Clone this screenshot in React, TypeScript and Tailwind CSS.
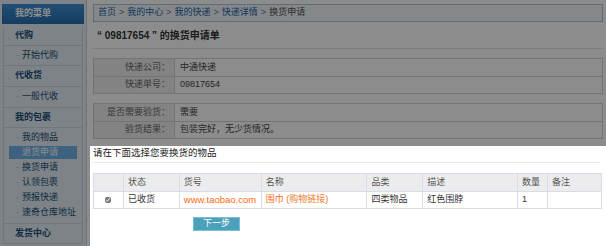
const font = { fontFamily: '"Liberation Sans", "Noto Sans CJK SC", sans-serif' };

function SideRow({ label, sub, h }: { label: string; sub?: boolean; h: string }) {
  return (
    <div className={`flex items-center ${h} border-b border-[#c9d9e4]`}>
      {sub ? (
        <>
          <span className="ml-[12px] w-[6px] text-[#9ab] text-[9px]">·</span>
          <span className="text-[#1d4e78] text-[9px]">{label}</span>
        </>
      ) : (
        <span className="ml-[11px] text-[#1d4e78] text-[9px] font-semibold">{label}</span>
      )}
    </div>
  );
}

function Sidebar() {
  const packages = ['我的物品', '退货申请', '换货申请', '认领包裹', '预报快递', '速奇仓库地址'];
  return (
    <aside className="w-[87px] shrink-0 bg-[#e4eef5] border-r border-[#c4d4df] pt-[4px]">
      <div className="mx-[2px] h-[20px] flex items-center pl-[13px] bg-gradient-to-b from-[#3f8fd6] to-[#276fb0] text-white text-[9px] font-bold">
        我的菜单
      </div>
      <div className="mx-[3px] mt-[2px] border-x border-[#c9d9e4]">
        <SideRow label="代购" h="h-[20px]" />
        <SideRow label="开始代购" sub h="h-[20px]" />
        <SideRow label="代收货" h="h-[21px]" />
        <SideRow label="一般代收" sub h="h-[21px]" />
        <SideRow label="我的包裹" h="h-[20px]" />
        <div className="pt-[2px] pb-[3px] border-b border-[#c9d9e4]">
          {packages.map((p) => (
            <div
              key={p}
              className={
                p === '退货申请'
                  ? 'flex items-center h-[13px] mx-[5px] my-[1px] bg-[#6fb3e8] text-white text-[9px]'
                  : 'flex items-center h-[15px] text-[9px]'
              }
            >
              {p === '退货申请' ? (
                <span className="ml-[13px]">{p}</span>
              ) : (
                <>
                  <span className="ml-[12px] w-[6px] text-[#9ab]">·</span>
                  <span className="text-[#1d4e78]">{p}</span>
                </>
              )}
            </div>
          ))}
        </div>
        <SideRow label="发货中心" h="h-[20px]" />
      </div>
    </aside>
  );
}

function InfoTable({ rows }: { rows: [string, string][] }) {
  return (
    <div className="border border-[#d4d4d4]">
      {rows.map(([k, v], i) => (
        <div key={k} className={`flex h-[17px] ${i > 0 ? 'border-t border-[#d4d4d4]' : ''}`}>
          <div className="w-[81px] shrink-0 bg-[#eeeeee] border-r border-[#d4d4d4] flex items-center justify-end pr-[4px] text-[9px] text-[#666]">
            {k}：
          </div>
          <div className="flex items-center pl-[5px] text-[9px] text-[#444]">{v}</div>
        </div>
      ))}
    </div>
  );
}

function Main() {
  const crumbs = ['首页', '我的中心', '我的快递', '快递详情'];
  return (
    <main className="flex-1 pl-[6px] pr-[3px] pt-[4px]">
      <div className="h-[18px] flex items-center pl-[4px] border border-[#a8c6da] bg-[#f0f7fc] text-[9px]">
        {crumbs.map((c) => (
          <span key={c} className="flex items-center">
            <span className="text-[#1e64a8]">{c}</span>
            <span className="text-[#777] mx-[3px]">&gt;</span>
          </span>
        ))}
        <span className="text-[#555]">换货申请</span>
      </div>
      <div className="h-[26px] mt-[1px] flex items-center pl-[4px] border-b border-[#e2e2e2] text-[10px] font-bold text-[#333]">
        “ 09817654 ” 的换货申请单
      </div>
      <div className="mt-[9px]">
        <InfoTable rows={[['快递公司', '中通快递'], ['快递单号', '09817654']]} />
      </div>
      <div className="mt-[9px]">
        <InfoTable rows={[['是否需要验货', '需要'], ['验货结果', '包装完好，无少货情况。']]} />
      </div>
    </main>
  );
}

function ExchangeDialog() {
  const th = 'h-[18px] px-[4px] text-left font-normal text-[#555] border border-[#d6dcea]';
  const td = 'h-[17px] px-[4px] border border-[#d6dcea]';
  return (
    <div className="absolute left-[90px] top-[146px] right-0 bottom-0 bg-white">
      <div className="h-[15px] flex items-center pl-[3px] text-[9.5px] text-[#222]">请在下面选择您要换货的物品</div>
      <div className="mt-[1px] mx-[3px] mr-[6px] border-t border-[#e8e8e8]" />
      <table className="ml-[3px] mt-[10px] w-[509px] border-collapse text-[9px]">
        <colgroup>
          <col className="w-[30px]" />
          <col className="w-[56px]" />
          <col className="w-[82px]" />
          <col className="w-[106px]" />
          <col className="w-[56px]" />
          <col className="w-[95px]" />
          <col className="w-[30px]" />
          <col className="w-[54px]" />
        </colgroup>
        <thead className="bg-[#ececec]">
          <tr>
            <th className={th}></th>
            <th className={th}>状态</th>
            <th className={th}>货号</th>
            <th className={th}>名称</th>
            <th className={th}>品类</th>
            <th className={th}>描述</th>
            <th className={th}>数量</th>
            <th className={th}>备注</th>
          </tr>
        </thead>
        <tbody>
          <tr>
            <td className={`${td} text-center`}>
              <input type="checkbox" defaultChecked className="w-[6px] h-[6px] align-middle accent-[#777]" />
            </td>
            <td className={`${td} text-[#333]`}>已收货</td>
            <td className={`${td} text-[#ff6a13] text-[9.5px]`}>www.taobao.com</td>
            <td className={`${td} text-[#ff6a13]`}>
              围巾 (<span className="text-[#f07a2a]">购物链接</span>)
            </td>
            <td className={`${td} text-[#333]`}>四类物品</td>
            <td className={`${td} text-[#333]`}>红色围脖</td>
            <td className={`${td} text-[#333]`}>1</td>
            <td className={td}></td>
          </tr>
        </tbody>
      </table>
      <button className="mt-[8px] ml-[103px] w-[47px] h-[14px] flex items-center justify-center bg-[#4ba1bb] border border-[#7cc0d4] text-white text-[9px]">
        下一步
      </button>
    </div>
  );
}

export default function App() {
  return (
    <div className="relative w-[606px] h-[246px] overflow-hidden bg-white" style={font}>
      <div className="flex h-full">
        <Sidebar />
        <Main />
      </div>
      <div className="absolute inset-0 bg-black/45" />
      <ExchangeDialog />
    </div>
  );
}
